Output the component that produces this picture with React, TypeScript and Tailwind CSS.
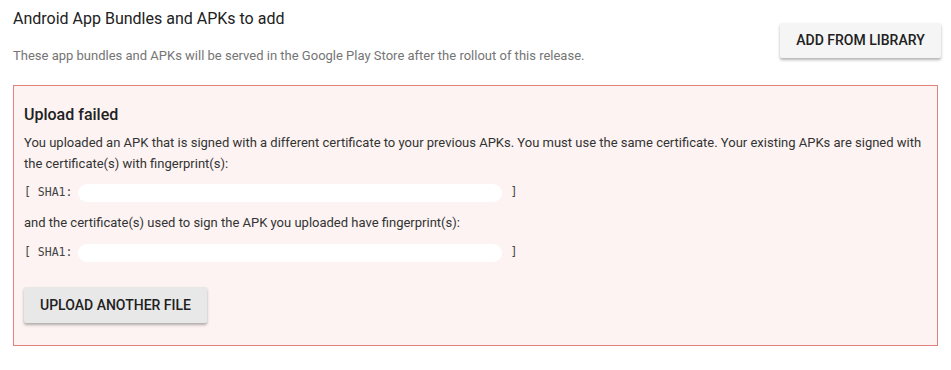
import React from 'react';

const Sha1Line: React.FC = () => (
  <div className="flex items-center h-[20px] font-['DejaVu_Sans_Mono',monospace] text-[11.5px] text-[#444]">
    <span className="whitespace-pre">[ SHA1:</span>
    <span className="ml-[6px] h-[18px] w-[424px] rounded-full bg-white" />
    <span className="ml-[8px]">]</span>
  </div>
);

export default function App() {
  return (
    <div className="w-[951px] h-[370px] bg-white font-['Roboto',sans-serif] text-[#212121]">
      <div className="flex justify-between pl-[13px] pr-[10px] pt-[9px]">
        <div>
          <h2 className="text-[16px] leading-[20px] text-[#212121]">Android App Bundles and APKs to add</h2>
          <p className="mt-[18px] text-[13px] leading-[18px] text-[#757575]">
            These app bundles and APKs will be served in the Google Play Store after the rollout of this release.
          </p>
        </div>
        <button className="mt-[14px] h-[35px] w-[161px] rounded-[2px] bg-[#f5f5f5] text-[14px] font-medium text-[#212121] shadow-[0_2px_3px_rgba(0,0,0,0.3)]">
          ADD FROM LIBRARY
        </button>
      </div>

      <div className="mx-[13px] mt-[20px] h-[261px] border border-[#e2827d] bg-[#fcf3f2] px-[10px] pt-[19px]">
        <h3 className="text-[16px] leading-[20px] font-medium text-[#212121]">Upload failed</h3>
        <p className="mt-[7px] text-[13px] leading-[21px] text-[#333]">
          You uploaded an APK that is signed with a different certificate to your previous APKs. You must use the same certificate. Your existing APKs are signed with the certificate(s) with fingerprint(s):
        </p>
        <div className="mt-[9px]">
          <Sha1Line />
        </div>
        <p className="mt-[9px] text-[13px] leading-[21px] text-[#333]">
          and the certificate(s) used to sign the APK you uploaded have fingerprint(s):
        </p>
        <div className="mt-[10px]">
          <Sha1Line />
        </div>
        <button className="mt-[24px] h-[36px] w-[183px] rounded-[2px] bg-[#e8e8e8] text-[14px] font-medium text-[#212121] shadow-[0_2px_3px_rgba(0,0,0,0.3)]">
          UPLOAD ANOTHER FILE
        </button>
      </div>
    </div>
  );
}
